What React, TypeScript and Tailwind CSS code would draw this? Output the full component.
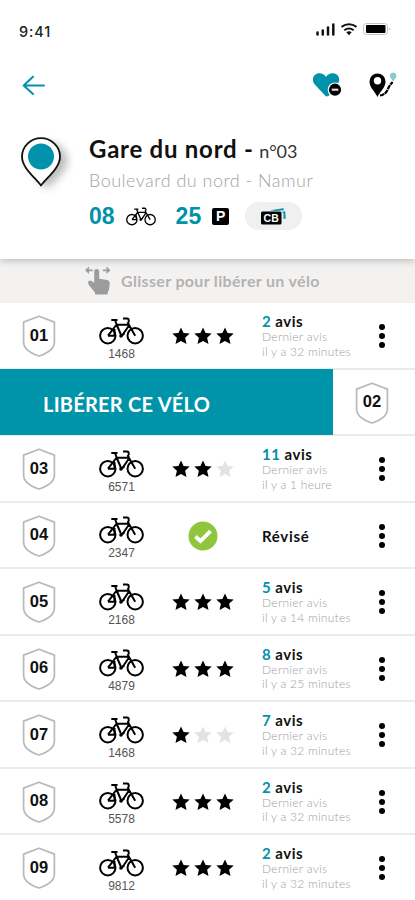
type Bike = {
  slot: string;
  id: string;
  stars?: number;
  reviews?: number;
  lastReview?: string;
};

const firstBike: Bike = { slot: "01", id: "1468", stars: 3, reviews: 2, lastReview: "32 minutes" };

const bikes: Bike[] = [
  { slot: "03", id: "6571", stars: 2, reviews: 11, lastReview: "1 heure" },
  { slot: "04", id: "2347" },
  { slot: "05", id: "2168", stars: 3, reviews: 5, lastReview: "14 minutes" },
  { slot: "06", id: "4879", stars: 3, reviews: 8, lastReview: "25 minutes" },
  { slot: "07", id: "1468", stars: 1, reviews: 7, lastReview: "32 minutes" },
  { slot: "08", id: "5578", stars: 3, reviews: 2, lastReview: "32 minutes" },
  { slot: "09", id: "9812", stars: 3, reviews: 2, lastReview: "32 minutes" },
];

function BikeIcon({ className }: { className: string }) {
  return (
    <svg viewBox="0 0 45 28" className={className} fill="none" stroke="#000" strokeWidth="2" aria-hidden="true">
      <circle cx="8.8" cy="18.7" r="7.7" />
      <circle cx="36.2" cy="18.7" r="7.7" />
      <path d="M12.300 3h6.200M16 3l1.800 5 4.700 11M17.500 7.800H29.800M30 8.500l-7 10.200M17.300 8 9 18.700M24 1.600h4q1.700 0 1.700 1.600v2M28.700 5l1.300 3 6.200 10.700" strokeLinejoin="round" />
      <path d="M15.500 12v7.500M22 18.700l3.500-2.200M9 18.700h6.500" />
      <circle cx="22" cy="19" r="1.800" fill="#000" stroke="none" />
    </svg>
  );
}

function Shield({ slot }: { slot: string }) {
  return (
    <div className="relative flex h-[42px] w-[34px] shrink-0 items-center justify-center">
      <svg viewBox="0 0 34 42" className="absolute inset-0 h-full w-full" fill="#fff" stroke="#b9b9b9" strokeWidth="1.7" aria-hidden="true">
        <path d="M17 1.200 32.400 7.100V27c0 7-6.200 11-15.400 14C7.800 38 1.600 34 1.600 27V7.100Z" strokeLinejoin="round" />
      </svg>
      <span className="relative -top-px font-['Liberation_Sans',sans-serif] text-[16.500px] font-bold text-[#111]">{slot}</span>
    </div>
  );
}

function Star({ filled }: { filled: boolean }) {
  return (
    <svg viewBox="0 0 18 18" className="h-[18px] w-[18px]" fill={filled ? "#000" : "#e3e3e3"} aria-hidden="true">
      <path d="m9 .4 2.600 5.500 6.100.700-4.600 4.100 1.400 6.200L9 13.900l-5.500 3 1.400-6.200L.3 6.600l6.100-.7Z" />
    </svg>
  );
}

function Checked() {
  return (
    <svg viewBox="0 0 30 30" className="h-[30px] w-[30px]" aria-hidden="true">
      <circle cx="15" cy="15" r="14.500" fill="#8fc63d" />
      <path d="m7.500 15.500 5 4.700 10-10" fill="none" stroke="#fff" strokeWidth="3.800" />
    </svg>
  );
}

function BikeRow({ bike }: { bike: Bike }) {
  const { slot, id, stars, reviews, lastReview } = bike;

  return (
    <li className="flex h-[66.500px] items-center border-b-2 border-[#ebebeb] pl-[22px] pt-[2px]">
      <Shield slot={slot} />
      <div className="ml-[43px] flex w-[45px] flex-col items-center pt-[4px]">
        <BikeIcon className="h-7 w-[45px]" />
        <span className="mt-[3px] font-['Liberation_Sans',sans-serif] text-xs leading-[12px] text-[#555]">{id}</span>
      </div>
      <div className="ml-7 flex w-[62px] justify-center gap-1">
        {stars === undefined ? <Checked /> : [1, 2, 3].map((n) => <Star key={n} filled={n <= stars} />)}
      </div>
      <div className="ml-[28px] w-[112px] whitespace-nowrap">
        {reviews === undefined ? (
          <p className="text-[15px] font-bold leading-5 tracking-[0.700px] text-[#111]">Révisé</p>
        ) : (
          <>
            <p className="text-[15px] font-bold leading-[17px] tracking-[0.500px] text-[#111]">
              <span className="text-[#0092aa]">{reviews}</span> avis
            </p>
            <p className="text-xs font-light leading-[14.500px] tracking-[0.300px] text-[#a0a0a0]">Dernier avis</p>
            <p className="text-xs font-light leading-[14.500px] tracking-[0.250px] text-[#a0a0a0]">il y a {lastReview}</p>
          </>
        )}
      </div>
      <button aria-label="Options" className="ml-[5px] flex flex-col gap-[3px]">
        <i className="h-[6px] w-[6px] rounded-full bg-black" />
        <i className="h-[6px] w-[6px] rounded-full bg-black" />
        <i className="h-[6px] w-[6px] rounded-full bg-black" />
      </button>
    </li>
  );
}

function StatusBar() {
  return (
    <div className="flex h-[60px] items-center justify-between pl-[19px] pr-[24px]">
      <span className="pt-[3px] font-[Inter,sans-serif] text-[14.500px] font-medium tracking-[0.850px] text-[#222]">9:41</span>
      <svg viewBox="0 0 75 14" className="h-[14px] w-[75px]" aria-hidden="true">
        <path d="M1.500 9.500v2M6.800 7.500v4M12 4.500v7M17.300 1.500v10" stroke="#111" strokeWidth="2.500" strokeLinecap="round" />
        <g fill="none" stroke="#111" strokeWidth="2">
          <path d="M25.500 3.900q7.500-5.300 15 0M28.300 7.200q4.700-3.400 9.400 0" />
        </g>
        <path d="m30.300 9.200 2.700 3 2.700-3q-2.700-2-5.400 0Z" fill="#111" />
        <rect x="47.500" y=".5" width="24" height="11" rx="3" fill="#fff" stroke="#c4c4c4" />
        <rect x="50" y="2" width="19.500" height="8" rx="1" fill="#000" />
        <path d="M73.500 4.500v3q1.500-1.500 0-3Z" fill="#999" />
      </svg>
    </div>
  );
}

function Toolbar() {
  return (
    <div className="flex h-[50px] items-center justify-between pl-[18px] pr-[18px]">
      <svg viewBox="0 0 32 28" className="h-7 w-8" fill="none" stroke="#0092aa" strokeWidth="2" strokeLinecap="round" strokeLinejoin="round" aria-label="Retour">
        <path d="M26 14.500H5.700M15 5.700l-9.300 8.800 9.300 8.500" />
      </svg>
      <div className="flex items-center gap-[26px]">
        <svg viewBox="0 0 30 26" className="h-[26px] w-[30px]" aria-hidden="true">
          <path d="M13 24.500 2 12.700C-2 8.700-.2 2.800 4.500 1.600 7.900.7 11 2.200 13 4.900c2-2.700 5.100-4.200 8.500-3.300 4.700 1.200 6.500 7.100 2.500 11.100L15.500 24Z" fill="#0092aa" />
          <circle cx="22" cy="17.700" r="7.300" fill="#fff" />
          <circle cx="22" cy="17.700" r="6.100" fill="#000" />
          <path d="M18.700 17.700h6.600" stroke="#ddd" strokeWidth="2.200" />
        </svg>
        <svg viewBox="0 0 28 26" className="h-[26px] w-[28px]" aria-hidden="true">
          <path d="M8.500 25C6.500 20 .5 16 .5 9.500a8 8 0 0 1 16 0c0 6.500-6 10.500-8 15.500Z" fill="#000" />
          <circle cx="8.500" cy="8.800" r="3.700" fill="#fff" />
          <path d="M11 23.500q5-.5 7.500-5.500 2-5 5.200-8" fill="none" stroke="#000" strokeWidth="2.200" strokeDasharray="4.500 .7" />
          <path d="M24.200 8.700c-1-2-2.700-2.700-2.700-4.900a2.700 2.700 0 0 1 5.400 0c0 2.200-1.700 2.900-2.700 4.900Z" fill="#8ccbd5" stroke="#6bbcc8" strokeWidth=".8" />
        </svg>
      </div>
    </div>
  );
}

function Station() {
  return (
    <div className="flex pl-[19px] pt-[24px]">
      <svg viewBox="0 0 56 60" className="h-[60px] w-14 shrink-0" aria-hidden="true">
        <defs>
          <filter id="pin-shadow" x="-50%" y="-50%" width="200%" height="200%">
            <feGaussianBlur stdDeviation="4" />
          </filter>
        </defs>
        <path d="M28 55C18 43 13 37 13 28a16 16 0 0 1 35-3c2 10-9 18-20 30Z" fill="#777" opacity=".5" filter="url(#pin-shadow)" />
        <path d="M22 51.500C15 42.500 3 33.500 3 22.700a19 18.500 0 0 1 38 0C41 33.500 29 42.500 22 51.500Z" fill="#fff" stroke="#111" strokeWidth="1.800" strokeLinejoin="round" />
        <circle cx="22" cy="22.500" r="13" fill="#0092aa" />
      </svg>
      <div className="ml-[14px] whitespace-nowrap">
        <h1 className="text-[24px] font-bold leading-[29px] tracking-[0.750px] text-[#111]">
          Gare du nord - <span className="-ml-px text-[18px] font-normal tracking-[-0.100px] text-[#333]">n°03</span>
        </h1>
        <p className="mt-px text-[18px] font-light leading-[27px] tracking-[0.480px] text-[#a3a3a3]">Boulevard du nord - Namur</p>
        <div className="mt-[8px] flex h-7 items-center font-['Liberation_Sans',sans-serif] text-[23px] font-bold text-[#0092aa]">
          <span>08</span>
          <BikeIcon className="ml-[11px] h-[19px] w-[30px]" />
          <span className="ml-[20px]">25</span>
          <span className="ml-[11px] flex h-[17px] w-[17px] items-center justify-center rounded-[2px] bg-black text-[14px] text-white">P</span>
          <div className="ml-[16px] flex h-7 w-[57px] items-center justify-center rounded-full bg-[#f0f0f0]">
            <svg viewBox="0 0 25 18" className="h-[18px] w-[25px]" aria-hidden="true">
              <path d="m9 3.200 13.500-2 .3 2L15 4M20.500 5l3.700-.8.500 7.300-2.200.5V6Z" fill="#0092aa" />
              <rect x="0" y="4.500" width="20.500" height="13" rx="1.500" fill="#000" />
              <text x="10.200" y="14.800" textAnchor="middle" fontSize="10.500" fontWeight="900" fill="#fff">CB</text>
            </svg>
          </div>
        </div>
      </div>
    </div>
  );
}

export default function App() {
  return (
    <main className="h-[900px] w-[415px] overflow-hidden bg-white font-[Lato,sans-serif]">
      <header className="relative h-[259px] bg-white shadow-[0_2px_7px_rgba(0,0,0,0.22)]">
        <StatusBar />
        <Toolbar />
        <Station />
      </header>
      <div className="flex h-11 items-center bg-[#f3f2f1] pl-[84px] text-[#9d9c9c]">
        <svg viewBox="0 0 28 30" className="h-[30px] w-7" fill="currentColor" aria-hidden="true">
          <path d="m1 4.300 4-3.700v2.800h3.700v1.800H5v2.800ZM26.500 4.300l-4-3.700v2.800h-3.700v1.800h3.700v2.800Z" />
          <path d="M10.200 5.500a2.500 2.500 0 0 1 5 0v7.300l8 1.200q2.600.5 2.600 3.300l-.8 6.200q-.3 1.700-1.300 2.700v2.300H11v-2l-6-7.300q-1.600-2.600-.6-4 1.400-1.200 3-.2l2.800 1.800Z" />
        </svg>
        <p className="ml-[9px] whitespace-nowrap text-[16px] font-bold tracking-[0.330px] text-[#b3b2b2]">Glisser pour libérer un vélo</p>
      </div>
      <ul>
        <BikeRow bike={firstBike} />
        <li className="flex h-[66.500px] items-center border-b-2 border-[#ebebeb]">
          <button className="h-[66.500px] w-[333px] shrink-0 bg-[#0094ab] pl-[43px] pt-[4px] text-left text-[20px] font-bold tracking-[0.250px] text-white">LIBÉRER CE VÉLO</button>
          <div className="ml-[22px] pt-[2px]">
            <Shield slot="02" />
          </div>
        </li>
        {bikes.map((bike) => (
          <BikeRow key={bike.slot} bike={bike} />
        ))}
      </ul>
    </main>
  );
}
